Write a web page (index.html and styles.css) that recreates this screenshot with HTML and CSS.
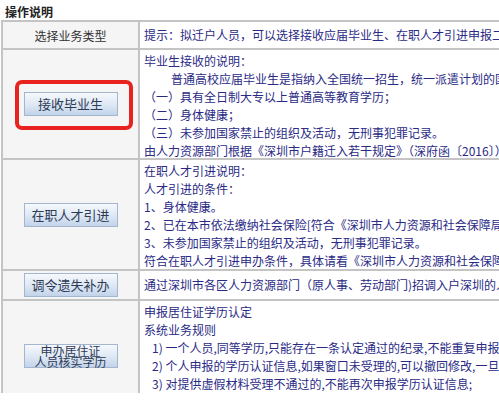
FILE: index.html
```html
<!DOCTYPE html>
<html lang="zh-CN">
<head>
    <meta charset="UTF-8">
    <meta name="viewport" content="width=device-width, initial-scale=1.0">
    <title>操作说明</title>
    <link rel="stylesheet" href="styles.css">
</head>
<body>
    <h1 class="title">操作说明</h1>
    <div class="frame">
        <div class="grid">
            <div class="side">选择业务类型</div>
            <div class="info single">提示：拟迁户人员，可以选择接收应届毕业生、在职人才引进申报二种业务类型，请根据自身情况选择。</div>

            <div class="side">
                <span class="hl"><button class="biz-btn">接收毕业生</button></span>
            </div>
            <div class="info">
                <p>毕业生接收的说明：</p>
                <p class="indent">普通高校应届毕业生是指纳入全国统一招生，统一派遣计划的国家普通高等院校毕业生。</p>
                <p>（一）具有全日制大专以上普通高等教育学历；</p>
                <p>（二）身体健康；</p>
                <p>（三）未参加国家禁止的组织及活动，无刑事犯罪记录。</p>
                <p>由人力资源部门根据《深圳市户籍迁入若干规定》（深府函〔2016〕）办理。</p>
            </div>

            <div class="side">
                <button class="biz-btn">在职人才引进</button>
            </div>
            <div class="info">
                <p>在职人才引进说明：</p>
                <p>人才引进的条件：</p>
                <p>1、身体健康。</p>
                <p>2、已在本市依法缴纳社会保险[符合《深圳市人力资源和社会保障局关于》]</p>
                <p>3、未参加国家禁止的组织及活动，无刑事犯罪记录。</p>
                <p>符合在职人才引进申办条件，具体请看《深圳市人力资源和社会保障局》</p>
            </div>

            <div class="side">
                <button class="biz-btn">调令遗失补办</button>
            </div>
            <div class="info single">通过深圳市各区人力资源部门（原人事、劳动部门)招调入户深圳的人员</div>

            <div class="side">
                <button class="biz-btn two-line">申办居住证<br>人员核实学历</button>
            </div>
            <div class="info">
                <p>申报居住证学历认定</p>
                <p>系统业务规则</p>
                <p class="rule">1) 一个人员,同等学历,只能存在一条认定通过的纪录,不能重复申报;</p>
                <p class="rule">2) 个人申报的学历认证信息,如果窗口未受理的,可以撤回修改,一旦受理;</p>
                <p class="rule">3) 对提供虚假材料受理不通过的,不能再次申报学历认证信息;</p>
                <p class="rule">4) 个人提交学历认证信息,需要经过窗口审核;</p>
            </div>
        </div>
    </div>
</body>
</html>
```

FILE: styles.css
```css
body {
    margin: 0;
    background-color: #ffffff;
    font-family: "Noto Sans CJK SC", "Noto Sans", sans-serif;
    font-size: 12px;
    overflow: hidden;
}
.title {
    margin: 0;
    padding: 3px 5px 0;
    height: 17px;
    font-size: 12px;
    line-height: 17px;
    font-weight: bold;
    color: #222222;
}
.frame {
    height: 373px;
    overflow: hidden;
    padding-left: 1px;
}
.grid {
    display: grid;
    grid-template-columns: 137px 900px;
    grid-template-rows: 28px 110px 111px 30px 112px;
    border-top: 2px solid #c4c4c4;
    border-left: 2px solid #c4c4c4;
    width: 1037px;
}
.side, .info {
    box-sizing: border-box;
    border-right: 2px solid #c4c4c4;
    border-bottom: 2px solid #c4c4c4;
}
.side {
    display: flex;
    align-items: center;
    justify-content: center;
    background-color: #f5f5f5;
    color: #333333;
}
.info {
    padding: 2px 4px 0;
    background-color: #ffffff;
    color: #2a2a86;
    white-space: nowrap;
    overflow: hidden;
    line-height: 18px;
}
.info.single {
    display: flex;
    align-items: center;
    padding-top: 0;
}
.info p {
    margin: 0;
}
.info .indent {
    padding-left: 27px;
}
.info .rule {
    padding-left: 8px;
}
.biz-btn {
    width: 94px;
    height: 24px;
    padding: 0;
    border: 1px solid #a3b6d0;
    background: linear-gradient(#f6f8fc, #dde7f4 55%, #c2d3ea);
    color: #2e3b55;
    font-family: "Noto Sans CJK SC", "Noto Sans", sans-serif;
    font-size: 13px;
    line-height: 20px;
    cursor: pointer;
}
.biz-btn.two-line {
    font-size: 12px;
    line-height: 11px;
}
.hl {
    position: relative;
    display: inline-block;
    line-height: 0;
}
.hl::before {
    content: '';
    position: absolute;
    top: -12px;
    right: -15px;
    bottom: -14px;
    left: -9px;
    border: 4px solid #e8231f;
    border-radius: 7px;
}
```
